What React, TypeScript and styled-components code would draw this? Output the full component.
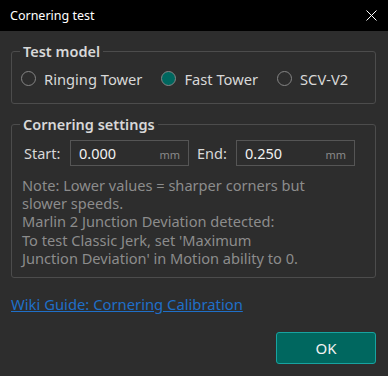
import React from "react";
import styled, { createGlobalStyle } from "styled-components";

const Global = createGlobalStyle`
  html, body { margin: 0; padding: 0; background: #2d2d2d; }
  * { box-sizing: border-box; }
`;

const Window = styled.div`
  width: 388px;
  height: 376px;
  display: flex;
  flex-direction: column;
  background: #2d2d2d;
  font-family: "Noto Sans", "Segoe UI", sans-serif;
  color: #d8d8d8;
`;

const TitleBar = styled.div`
  height: 31px;
  background: #000;
  display: flex;
  align-items: center;
  justify-content: space-between;
  padding: 0 10px 0 10px;
  font-size: 12.5px;
  color: #fff;
`;

const CloseIcon = styled.svg`
  width: 11px;
  height: 11px;
  margin-right: 1px;
`;

const Body = styled.div`
  flex: 1;
  display: flex;
  flex-direction: column;
  padding: 12px 12px 12px 11px;
`;

const Group = styled.fieldset<{ $gap?: number }>`
  margin: 0 0 ${(p) => p.$gap ?? 0}px 0;
  border: 1px solid #4c4c4c;
  border-radius: 3px;
  padding: 0 10px 0 9px;
  min-width: 0;
`;

const Legend = styled.legend`
  padding: 0 3px;
  margin-left: -1px;
  font-size: 14.5px;
  font-weight: 600;
  color: #d8d8d8;
  line-height: 16px;
`;

const RadioRow = styled.div`
  display: flex;
  align-items: center;
  gap: 19px;
  height: 44px;
  padding-bottom: 5px;
`;

const RadioItem = styled.label`
  display: flex;
  align-items: center;
  flex: none;
  white-space: nowrap;
  font-size: 14.7px;
  color: #d8d8d8;
`;

const RadioDot = styled.span<{ $checked?: boolean }>`
  width: 15px;
  height: 15px;
  border-radius: 50%;
  border: 1px solid #858585;
  background: ${(p) => (p.$checked ? "#00675f" : "transparent")};
  margin-right: 8px;
  flex: none;
`;

const FieldRow = styled.div`
  display: flex;
  align-items: center;
  padding-top: 8px;
  padding-left: 3px;
`;

const FieldLabel = styled.span<{ $width: number }>`
  width: ${(p) => p.$width}px;
  font-size: 14.5px;
  color: #d8d8d8;
`;

const InputBox = styled.div`
  width: 119px;
  height: 26px;
  border: 1px solid #555;
  display: flex;
  align-items: center;
  justify-content: space-between;
  padding: 0 8px 0 8px;
  margin-right: 8px;
`;

const Value = styled.span`
  font-size: 14.5px;
  color: #f2f2f2;
`;

const Unit = styled.span`
  font-size: 11px;
  color: #8a8a8a;
  padding-top: 3px;
`;

const Note = styled.div`
  font-size: 14.6px;
  line-height: 18.2px;
  color: #8c8c8c;
  white-space: nowrap;
  padding: 10px 0 10px 1px;
`;

const WikiLink = styled.a`
  align-self: flex-start;
  margin-top: 16px;
  font-size: 14.8px;
  color: #1f6fc8;
  text-decoration: underline;
  cursor: pointer;
`;

const Footer = styled.div`
  margin-top: auto;
  display: flex;
  justify-content: flex-end;
`;

const OkButton = styled.button`
  width: 100px;
  height: 32px;
  background: #00675f;
  border: 1px solid #17a3a0;
  border-radius: 3px;
  color: #f2f2f2;
  font-family: "Noto Sans", "Segoe UI", sans-serif;
  font-size: 15px;
`;

export default function App() {
  return (
    <>
      <Global />
      <Window>
        <TitleBar>
          <span>Cornering test</span>
          <CloseIcon viewBox="0 0 11 11">
            <path d="M0.5 0.5 L10.5 10.5 M10.5 0.5 L0.5 10.5" stroke="#fff" strokeWidth="1" />
          </CloseIcon>
        </TitleBar>
        <Body>
          <Group $gap={12}>
            <Legend>Test model</Legend>
            <RadioRow>
              <RadioItem>
                <RadioDot />
                Ringing Tower
              </RadioItem>
              <RadioItem>
                <RadioDot $checked />
                Fast Tower
              </RadioItem>
              <RadioItem>
                <RadioDot />
                SCV-V2
              </RadioItem>
            </RadioRow>
          </Group>
          <Group>
            <Legend>Cornering settings</Legend>
            <FieldRow>
              <FieldLabel $width={46}>Start:</FieldLabel>
              <InputBox>
                <Value>0.000</Value>
                <Unit>mm</Unit>
              </InputBox>
              <FieldLabel $width={39}>End:</FieldLabel>
              <InputBox>
                <Value>0.250</Value>
                <Unit>mm</Unit>
              </InputBox>
            </FieldRow>
            <Note>
              Note: Lower values = sharper corners but
              <br />
              slower speeds.
              <br />
              Marlin 2 Junction Deviation detected:
              <br />
              To test Classic Jerk, set 'Maximum
              <br />
              Junction Deviation' in Motion ability to 0.
            </Note>
          </Group>
          <WikiLink>Wiki Guide: Cornering Calibration</WikiLink>
          <Footer>
            <OkButton>OK</OkButton>
          </Footer>
        </Body>
      </Window>
    </>
  );
}
